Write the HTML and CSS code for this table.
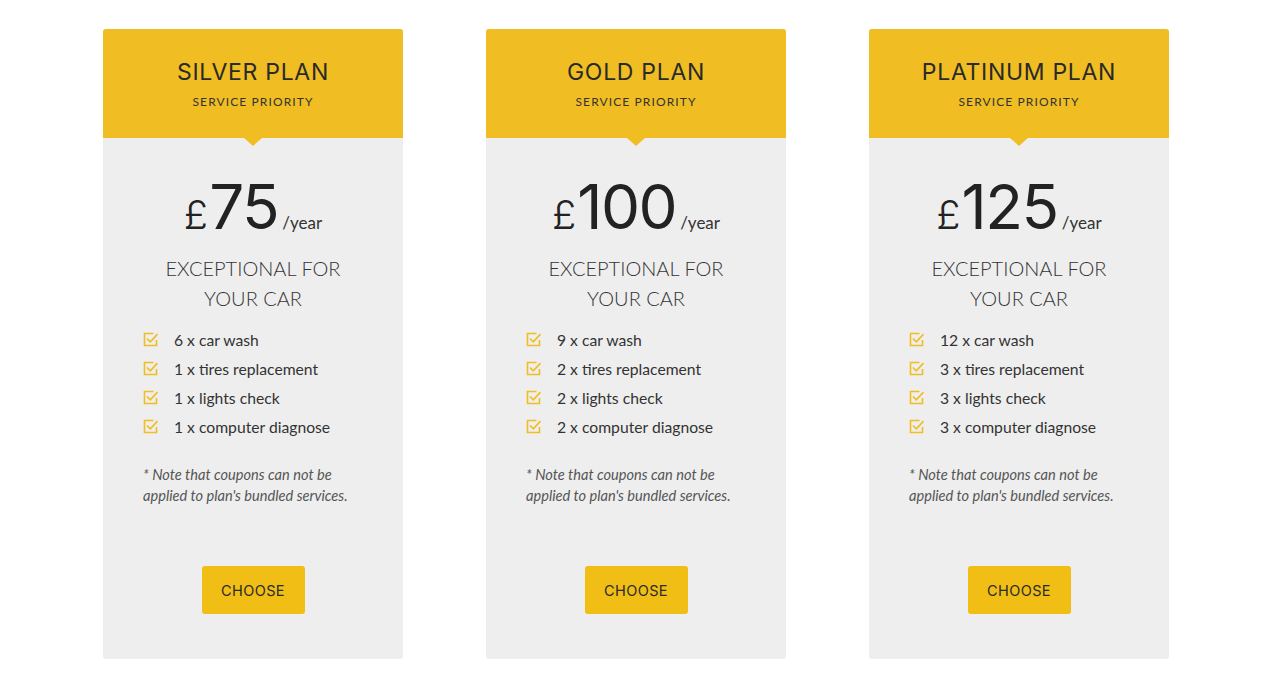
FILE: index.html
```html
<!DOCTYPE html>
<html>
<head>
<meta charset="utf-8">
<link rel="stylesheet" href="styles.css">
</head>
<body>
<div class="plans">
  <div class="card">
    <div class="head">
      <h2 class="title">SILVER PLAN</h2>
      <div class="sub">SERVICE PRIORITY</div>
    </div>
    <div class="body">
      <div class="price"><span class="cur">£</span><span class="amt">75</span><span class="per">/year</span></div>
      <div class="tag">EXCEPTIONAL FOR<br>YOUR CAR</div>
      <ul class="feats">
        <li><svg class="chk" viewBox="0 0 16 15"><path d="M10.5 1.5H1.5V13.5H13.5V8" fill="none" stroke="#f0be22" stroke-width="1.6"/><path d="M4 6.5L7.3 9.8L14.5 2.2" fill="none" stroke="#f0be22" stroke-width="1.7"/></svg>6 x car wash</li>
        <li><svg class="chk" viewBox="0 0 16 15"><path d="M10.5 1.5H1.5V13.5H13.5V8" fill="none" stroke="#f0be22" stroke-width="1.6"/><path d="M4 6.5L7.3 9.8L14.5 2.2" fill="none" stroke="#f0be22" stroke-width="1.7"/></svg>1 x tires replacement</li>
        <li><svg class="chk" viewBox="0 0 16 15"><path d="M10.5 1.5H1.5V13.5H13.5V8" fill="none" stroke="#f0be22" stroke-width="1.6"/><path d="M4 6.5L7.3 9.8L14.5 2.2" fill="none" stroke="#f0be22" stroke-width="1.7"/></svg>1 x lights check</li>
        <li><svg class="chk" viewBox="0 0 16 15"><path d="M10.5 1.5H1.5V13.5H13.5V8" fill="none" stroke="#f0be22" stroke-width="1.6"/><path d="M4 6.5L7.3 9.8L14.5 2.2" fill="none" stroke="#f0be22" stroke-width="1.7"/></svg>1 x computer diagnose</li>
      </ul>
      <p class="note">* Note that coupons can not be applied to plan's bundled services.</p>
      <div class="btnwrap"><a class="btn">CHOOSE</a></div>
    </div>
  </div>
  <div class="card">
    <div class="head">
      <h2 class="title">GOLD PLAN</h2>
      <div class="sub">SERVICE PRIORITY</div>
    </div>
    <div class="body">
      <div class="price"><span class="cur">£</span><span class="amt">100</span><span class="per">/year</span></div>
      <div class="tag">EXCEPTIONAL FOR<br>YOUR CAR</div>
      <ul class="feats">
        <li><svg class="chk" viewBox="0 0 16 15"><path d="M10.5 1.5H1.5V13.5H13.5V8" fill="none" stroke="#f0be22" stroke-width="1.6"/><path d="M4 6.5L7.3 9.8L14.5 2.2" fill="none" stroke="#f0be22" stroke-width="1.7"/></svg>9 x car wash</li>
        <li><svg class="chk" viewBox="0 0 16 15"><path d="M10.5 1.5H1.5V13.5H13.5V8" fill="none" stroke="#f0be22" stroke-width="1.6"/><path d="M4 6.5L7.3 9.8L14.5 2.2" fill="none" stroke="#f0be22" stroke-width="1.7"/></svg>2 x tires replacement</li>
        <li><svg class="chk" viewBox="0 0 16 15"><path d="M10.5 1.5H1.5V13.5H13.5V8" fill="none" stroke="#f0be22" stroke-width="1.6"/><path d="M4 6.5L7.3 9.8L14.5 2.2" fill="none" stroke="#f0be22" stroke-width="1.7"/></svg>2 x lights check</li>
        <li><svg class="chk" viewBox="0 0 16 15"><path d="M10.5 1.5H1.5V13.5H13.5V8" fill="none" stroke="#f0be22" stroke-width="1.6"/><path d="M4 6.5L7.3 9.8L14.5 2.2" fill="none" stroke="#f0be22" stroke-width="1.7"/></svg>2 x computer diagnose</li>
      </ul>
      <p class="note">* Note that coupons can not be applied to plan's bundled services.</p>
      <div class="btnwrap"><a class="btn">CHOOSE</a></div>
    </div>
  </div>
  <div class="card">
    <div class="head">
      <h2 class="title">PLATINUM PLAN</h2>
      <div class="sub">SERVICE PRIORITY</div>
    </div>
    <div class="body">
      <div class="price"><span class="cur">£</span><span class="amt">125</span><span class="per">/year</span></div>
      <div class="tag">EXCEPTIONAL FOR<br>YOUR CAR</div>
      <ul class="feats">
        <li><svg class="chk" viewBox="0 0 16 15"><path d="M10.5 1.5H1.5V13.5H13.5V8" fill="none" stroke="#f0be22" stroke-width="1.6"/><path d="M4 6.5L7.3 9.8L14.5 2.2" fill="none" stroke="#f0be22" stroke-width="1.7"/></svg>12 x car wash</li>
        <li><svg class="chk" viewBox="0 0 16 15"><path d="M10.5 1.5H1.5V13.5H13.5V8" fill="none" stroke="#f0be22" stroke-width="1.6"/><path d="M4 6.5L7.3 9.8L14.5 2.2" fill="none" stroke="#f0be22" stroke-width="1.7"/></svg>3 x tires replacement</li>
        <li><svg class="chk" viewBox="0 0 16 15"><path d="M10.5 1.5H1.5V13.5H13.5V8" fill="none" stroke="#f0be22" stroke-width="1.6"/><path d="M4 6.5L7.3 9.8L14.5 2.2" fill="none" stroke="#f0be22" stroke-width="1.7"/></svg>3 x lights check</li>
        <li><svg class="chk" viewBox="0 0 16 15"><path d="M10.5 1.5H1.5V13.5H13.5V8" fill="none" stroke="#f0be22" stroke-width="1.6"/><path d="M4 6.5L7.3 9.8L14.5 2.2" fill="none" stroke="#f0be22" stroke-width="1.7"/></svg>3 x computer diagnose</li>
      </ul>
      <p class="note">* Note that coupons can not be applied to plan's bundled services.</p>
      <div class="btnwrap"><a class="btn">CHOOSE</a></div>
    </div>
  </div>
</div>
</body>
</html>
```
FILE: styles.css
```css
* { box-sizing: border-box; }
html, body { margin: 0; padding: 0; background: #fff; }
body { font-family: Lato, "Open Sans", sans-serif; color: #333; }
.plans {
  display: flex;
  justify-content: center;
  gap: 83px;
  padding-top: 29px;
}
.card {
  width: 300px;
  height: 630px;
  background: #eeeeee;
  border-radius: 3px;
  display: flex;
  flex-direction: column;
}
.head {
  position: relative;
  height: 109px;
  background: #f0be22;
  border-radius: 3px 3px 0 0;
  text-align: center;
  padding-top: 30px;
}
.head::after {
  content: "";
  position: absolute;
  left: 50%;
  bottom: -8px;
  margin-left: -9px;
  border-left: 9px solid transparent;
  border-right: 9px solid transparent;
  border-top: 8px solid #f0be22;
}
.title {
  margin: 0;
  font-family: Inter, "Open Sans", sans-serif;
  font-weight: 400;
  font-size: 23px;
  line-height: 26px;
  letter-spacing: 0.7px;
  color: #2a2a2a;
}
.sub {
  margin-top: 10px;
  font-size: 12px;
  line-height: 14px;
  letter-spacing: 1.1px;
  color: #333;
}
.body {
  flex: 1;
  display: flex;
  flex-direction: column;
  padding: 39px 40px 45px;
}
.price {
  display: flex;
  justify-content: center;
  align-items: baseline;
  color: #222;
  font-family: Inter, "Open Sans", sans-serif;
  height: 60px;
}
.cur { font-size: 40px; font-weight: 300; margin-right: 1px; }
.amt { font-size: 62px; font-weight: 400; letter-spacing: -1.5px; line-height: 60px; }
.per { font-family: Lato, sans-serif; font-size: 17px; margin-left: 4px; color: #333; }
.tag {
  margin-top: 16px;
  text-align: center;
  font-weight: 300;
  font-size: 20px;
  line-height: 30px;
  color: #333;
}
.feats {
  list-style: none;
  margin: 12px 0 0;
  padding: 0;
}
.feats li {
  display: flex;
  align-items: center;
  height: 29px;
  font-size: 15.7px;
  color: #333;
}
.chk { width: 16px; height: 15px; margin-right: 15px; flex: none; }
.note {
  margin: 23px 0 0;
  font-style: italic;
  font-size: 14.6px;
  line-height: 21px;
  color: #555;
  padding-right: 0;
  margin-right: -10px;
}
.btnwrap {
  margin-top: auto;
  display: flex;
  justify-content: center;
}
.btn {
  display: inline-flex;
  align-items: center;
  justify-content: center;
  width: 103px;
  height: 48px;
  background: #f0be14;
  border-radius: 3px;
  font-family: Inter, "Open Sans", sans-serif;
  font-size: 14.5px;
  letter-spacing: 0.4px;
  color: #2a2a2a;
}
```
